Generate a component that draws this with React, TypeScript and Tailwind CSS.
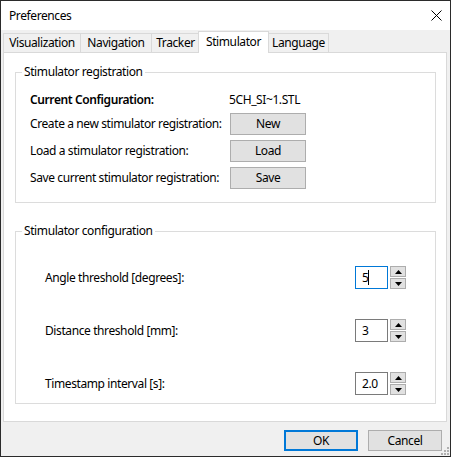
const tabs = [
  { label: 'Visualization', w: 'w-[78px]', ml: '' },
  { label: 'Navigation', w: 'w-[72px]', ml: '-ml-[1px]' },
  { label: 'Tracker', w: 'w-[49px]', ml: '-ml-[1px]' },
  { label: 'Stimulator', w: 'w-[71px]', ml: '-ml-[2px]', active: true },
  { label: 'Language', w: 'w-[61px]', ml: '-ml-[1px]' },
];

const regRows = [
  { label: 'Create a new stimulator registration:', button: 'New' },
  { label: 'Load a stimulator registration:', button: 'Load' },
  { label: 'Save current stimulator registration:', button: 'Save' },
];

const configRows = [
  { label: 'Angle threshold [degrees]:', value: '5', focused: true },
  { label: 'Distance threshold [mm]:', value: '3' },
  { label: 'Timestamp interval [s]:', value: '2.0' },
];

/* ── Spin box (text + up/down) ─────────────────────── */
const SpinBox = ({ value, focused }: { value: string; focused?: boolean }) => (
  <div className="flex items-center gap-[2px]">
    <div
      className={`w-[33px] h-[23px] border bg-white flex items-center pl-[6px] ${
        focused ? 'border-[#0078d7]' : 'border-[#7a7a7a]'
      }`}
    >
      {value}
      {focused && <span className="w-[1px] h-[15px] bg-black" />}
    </div>
    <div className="flex flex-col gap-[1px]">
      <div className="w-[16px] h-[11px] border border-[#adadad] bg-[#e1e1e1] flex items-center justify-center">
        <svg width="7" height="4" viewBox="0 0 7 4">
          <path d="M0 4 L3.5 0 L7 4 Z" fill="#000" />
        </svg>
      </div>
      <div className="w-[16px] h-[11px] border border-[#adadad] bg-[#e1e1e1] flex items-center justify-center">
        <svg width="7" height="4" viewBox="0 0 7 4">
          <path d="M0 0 L3.5 4 L7 0 Z" fill="#000" />
        </svg>
      </div>
    </div>
  </div>
);

export default function App() {
  return (
    <div className="w-[451px] h-[457px] border border-[#2b2b2b] bg-[#f0f0f0] flex flex-col text-[12px] leading-[16px] tracking-[-0.4px] whitespace-nowrap text-black font-['Noto_Sans',sans-serif]">
      {/* Title bar */}
      <div className="h-[29px] shrink-0 bg-white flex items-center justify-between pl-[8px] pr-[8px]">
        <span>Preferences</span>
        <svg width="11" height="11" viewBox="0 0 11 11">
          <path d="M0.5 0.5 L10.5 10.5 M10.5 0.5 L0.5 10.5" stroke="#000" strokeWidth="1" />
        </svg>
      </div>

      {/* Tabs + panel */}
      <div className="flex-1 flex flex-col pl-[2px] pr-[3px]">
        <div className="h-[22px] shrink-0 flex items-end">
          {tabs.map((t) =>
            t.active ? (
              <div
                key={t.label}
                className={`${t.w} ${t.ml} h-[22px] -mb-[1px] relative z-10 bg-white border-t border-l border-r border-[#d9d9d9] flex items-center justify-center pb-[2px]`}
              >
                {t.label}
              </div>
            ) : (
              <div
                key={t.label}
                className={`${t.w} ${t.ml} h-[19px] bg-[#f0f0f0] border-t border-l border-r border-[#d9d9d9] flex items-center justify-center`}
              >
                {t.label}
              </div>
            ),
          )}
        </div>

        <div className="flex-1 bg-white border border-[#d9d9d9] pl-[11px] pr-[10px] pt-[11px]">
          {/* Stimulator registration */}
          <fieldset className="border border-[#dcdcdc] px-[6px] pb-[13px]">
            <legend className="px-[2px] leading-[16px]">Stimulator registration</legend>
            <div className="pl-[8px] mt-[9px] flex flex-col">
              <div className="h-[22px] flex items-center">
                <span className="w-[199px] font-semibold">Current Configuration:</span>
                <span>5CH_SI~1.STL</span>
              </div>
              <div className="flex flex-col gap-[5px] mt-[2px]">
                {regRows.map((r) => (
                  <div key={r.button} className="h-[22px] flex items-center">
                    <span className="w-[200px]">{r.label}</span>
                    <button className="w-[76px] h-[22px] border border-[#adadad] bg-[#e1e1e1] flex items-center justify-center">
                      {r.button}
                    </button>
                  </div>
                ))}
              </div>
            </div>
          </fieldset>

          {/* Stimulator configuration */}
          <fieldset className="border border-[#dcdcdc] px-[6px] pb-[8px] mt-[20px]">
            <legend className="px-[2px] leading-[16px]">Stimulator configuration</legend>
            <div className="pl-[23px] pr-[23px] mt-[27px] flex flex-col gap-[30px]">
              {configRows.map((r) => (
                <div key={r.label} className="h-[23px] flex items-center justify-between">
                  <span>{r.label}</span>
                  <SpinBox value={r.value} focused={r.focused} />
                </div>
              ))}
            </div>
          </fieldset>
        </div>
      </div>

      {/* Footer */}
      <div className="h-[34px] shrink-0 relative flex justify-end items-start gap-[10px] pt-[8px] pr-[8px]">
        <button className="w-[74px] h-[21px] border-2 border-[#0078d7] bg-[#e1e1e1] flex items-center justify-center">
          OK
        </button>
        <button className="w-[74px] h-[21px] border border-[#adadad] bg-[#e1e1e1] flex items-center justify-center">
          Cancel
        </button>
        <svg className="absolute right-[1px] bottom-[1px]" width="8" height="8" viewBox="0 0 8 8">
          <rect x="6" y="0" width="2" height="2" fill="#b0b0b0" />
          <rect x="3" y="3" width="2" height="2" fill="#b0b0b0" />
          <rect x="6" y="3" width="2" height="2" fill="#b0b0b0" />
          <rect x="0" y="6" width="2" height="2" fill="#b0b0b0" />
          <rect x="3" y="6" width="2" height="2" fill="#b0b0b0" />
          <rect x="6" y="6" width="2" height="2" fill="#b0b0b0" />
        </svg>
      </div>
    </div>
  );
}
